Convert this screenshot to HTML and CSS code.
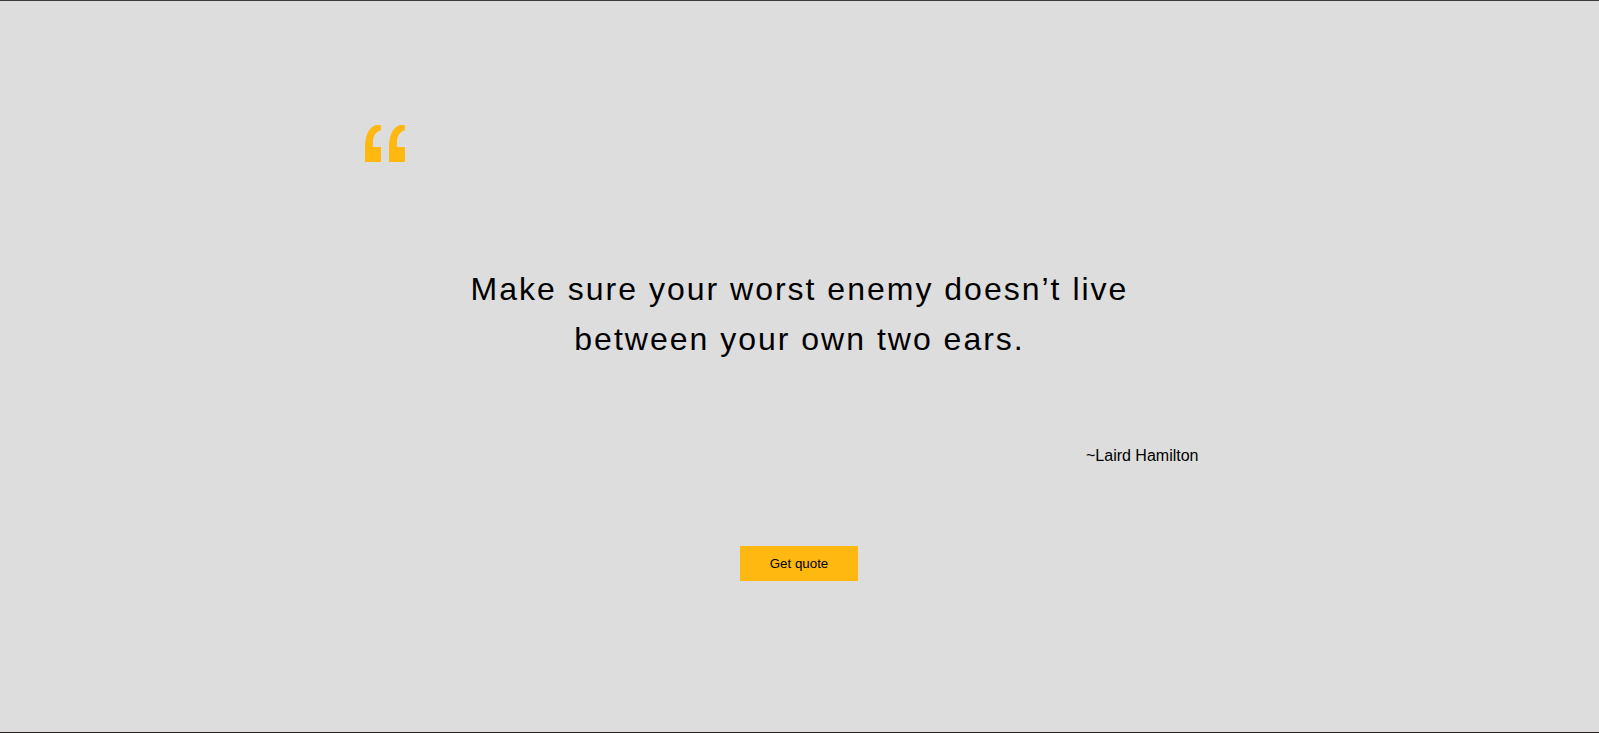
FILE: index.html
```html
<!DOCTYPE html>
<html lang="en">
<head>
<meta charset="utf-8">
<title>Quote</title>
<link rel="stylesheet" href="styles.css">
</head>
<body>
<main class="page">
  <section class="quote-card">
    <svg class="quote-mark" width="41" height="37" viewBox="0 0 41 37" aria-hidden="true">
      <path d="M11 0 L16 0 L16 5 C12 6.5 8.5 10 8 15 L8 22 L16 22 L16 37 L0 37 L0 22 C0 10 4.5 1.5 11 0 Z"/>
      <path transform="translate(24 0)" d="M11 0 L16 0 L16 5 C12 6.5 8.5 10 8 15 L8 22 L16 22 L16 37 L0 37 L0 22 C0 10 4.5 1.5 11 0 Z"/>
    </svg>
    <p class="quote-text">Make sure your worst enemy doesn’t live<br>between your own two ears.</p>
    <p class="quote-author">~Laird Hamilton</p>
    <div class="actions">
      <button class="btn" type="button">Get quote</button>
    </div>
  </section>
</main>
</body>
</html>
```

FILE: styles.css
```css
html, body {
  margin: 0;
  padding: 0;
}

body {
  background: #dddddd;
  font-family: "Liberation Sans", Arial, sans-serif;
  color: #000;
}

.page {
  box-sizing: border-box;
  height: 733px;
  border-top: 1px solid #3c3c3c;
  border-bottom: 1px solid #2a201b;
  overflow: hidden;
}

.quote-card {
  width: 870px;
  margin: 0 auto;
  padding-top: 124px;
  display: flex;
  flex-direction: column;
}

.quote-mark {
  display: block;
  fill: #ffb80f;
  margin-left: 0;
}

.quote-text {
  margin: 102px 0 0;
  font-size: 32px;
  line-height: 50px;
  letter-spacing: 2px;
  text-align: center;
}

.quote-author {
  margin: 83px 36px 0 0;
  font-size: 16px;
  line-height: 18px;
  text-align: right;
}

.actions {
  display: flex;
  justify-content: center;
  margin-top: 81px;
  padding-right: 1px;
}

.btn {
  width: 118px;
  height: 35px;
  border: none;
  border-radius: 0;
  background: #ffb80f;
  color: #000;
  font-family: "Liberation Sans", Arial, sans-serif;
  font-size: 13.333px;
  padding: 0;
  cursor: pointer;
}
```
